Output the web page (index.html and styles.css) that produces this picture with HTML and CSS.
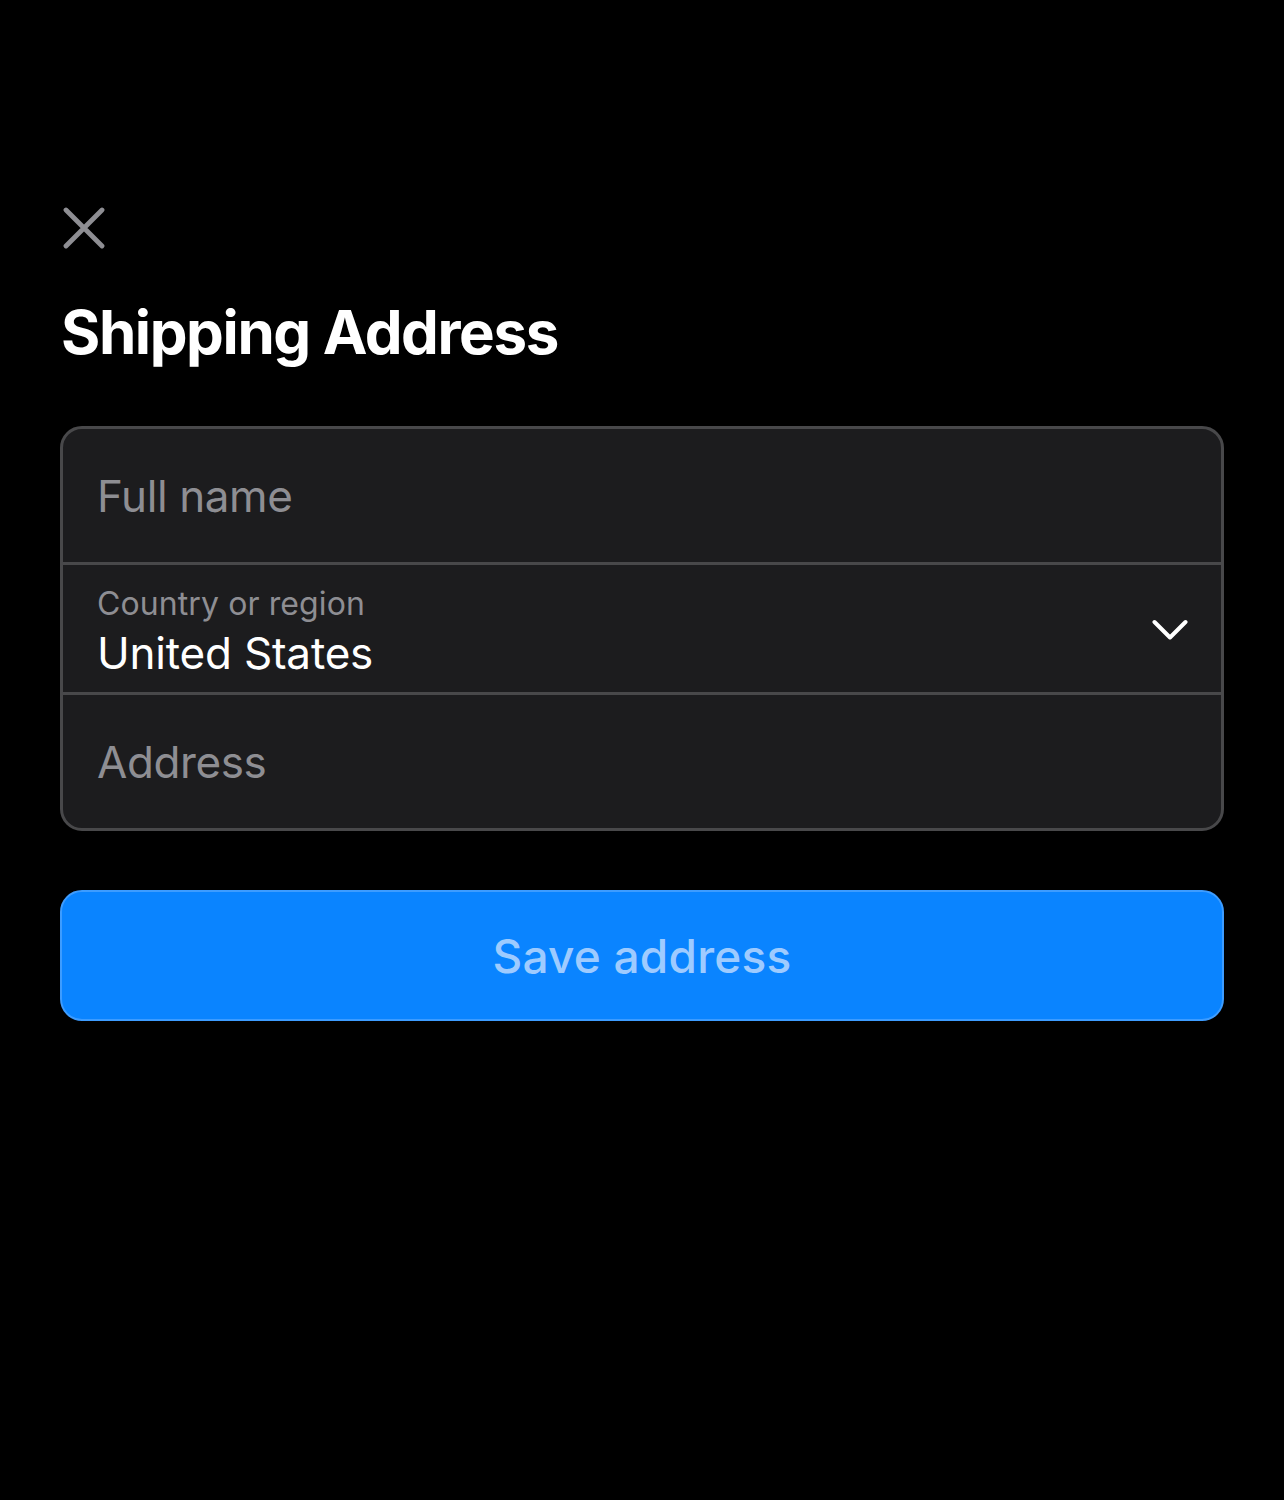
FILE: index.html
```html
<!DOCTYPE html>
<html lang="en">
<head>
<meta charset="utf-8">
<title>Shipping Address</title>
<link rel="stylesheet" href="styles.css">
</head>
<body>
<main class="sheet">
  <button class="close" aria-label="Close">
    <svg width="42" height="42" viewBox="0 0 42 42" fill="none" stroke="#8e8e93" stroke-width="4.8" stroke-linecap="round">
      <path d="M3 3 L39 39 M39 3 L3 39"/>
    </svg>
  </button>
  <h1 class="title">Shipping Address</h1>
  <div class="card">
    <div class="row row-simple"><span class="placeholder">Full name</span></div>
    <div class="row row-select">
      <div class="select-text">
        <span class="label">Country or region</span>
        <span class="value">United States</span>
      </div>
      <svg class="chevron" width="36" height="22" viewBox="0 0 36 22" fill="none" stroke="#ffffff" stroke-width="4" stroke-linecap="round" stroke-linejoin="round">
        <path d="M2.5 3 L18 18.5 L33.5 3"/>
      </svg>
    </div>
    <div class="row row-simple"><span class="placeholder">Address</span></div>
  </div>
  <button class="save">Save address</button>
</main>
</body>
</html>
```
FILE: styles.css
```css
html, body {
  margin: 0;
  padding: 0;
  background: #000000;
}
body {
  font-family: Inter, "Noto Sans", sans-serif;
  color: #ffffff;
  width: 1284px;
  height: 1500px;
}
.sheet {
  padding: 207px 60px 0 60px;
  display: flex;
  flex-direction: column;
}
.close {
  background: none;
  border: none;
  padding: 0;
  margin: 0 0 0 3px;
  width: 42px;
  height: 42px;
  display: block;
}
.close svg { display: block; }
.title {
  margin: 47px 0 0 1px;
  font-size: 60px;
  font-weight: 700;
  line-height: 72px;
  letter-spacing: -1.4px;
}
.card {
  margin-top: 58px;
  background: #1c1c1e;
  border: 3px solid #48484a;
  border-radius: 22px;
  overflow: hidden;
}
.row {
  padding: 0 34px;
  display: flex;
  align-items: center;
}
.row + .row {
  border-top: 3px solid #48484a;
}
.row-simple {
  height: 133px;
}
.row-select {
  height: 127px;
  justify-content: space-between;
}
.placeholder {
  font-size: 44px;
  color: #8e8e93;
  letter-spacing: -0.4px;
}
.select-text {
  display: flex;
  flex-direction: column;
  padding-top: 4px;
}
.label {
  font-size: 32px;
  line-height: 44px;
  color: #8e8e93;
  letter-spacing: 0.1px;
}
.value {
  font-size: 44px;
  line-height: 54px;
  color: #ffffff;
  letter-spacing: -0.2px;
}
.chevron {
  display: block;
  margin-right: -1px;
  margin-top: 2px;
}
.save {
  margin-top: 59px;
  height: 131px;
  background: #0a84ff;
  border: 2px solid #3d9cff;
  border-radius: 22px;
  color: #9ecbff;
  font-family: Inter, "Noto Sans", sans-serif;
  font-size: 46px;
  font-weight: 500;
  letter-spacing: 0.2px;
  padding: 0;
}
```
